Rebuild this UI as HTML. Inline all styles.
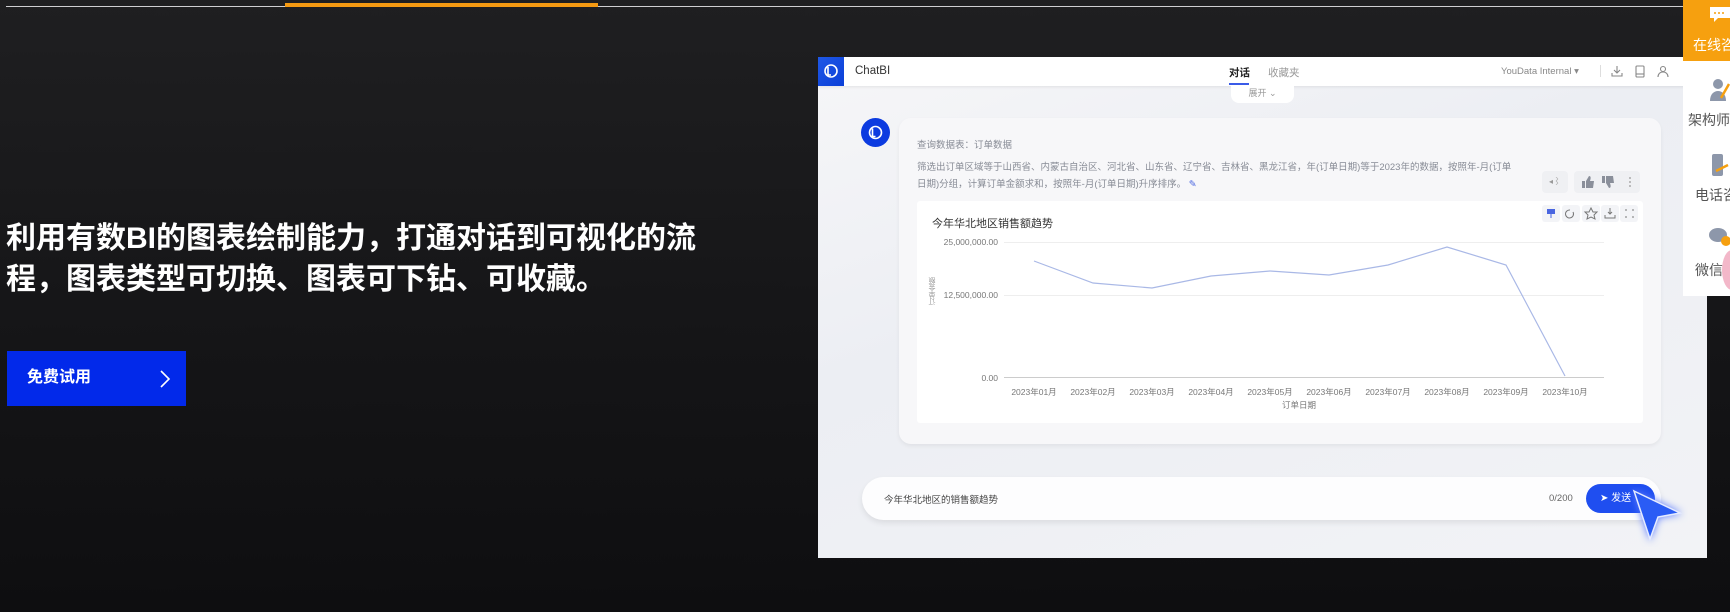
<!DOCTYPE html>
<html><head><meta charset="utf-8"><style>
*{margin:0;padding:0;box-sizing:border-box}
body{width:1730px;height:612px;overflow:hidden;background:linear-gradient(180deg,#1f1f21 0%,#161618 50%,#0e0e10 100%);font-family:"Liberation Sans","Noto Sans CJK SC",sans-serif;position:relative}
.abs{position:absolute}
.h{left:6px;color:#fff;font-weight:700;font-size:30px;white-space:nowrap}
.t{color:#888c96;font-size:11px;white-space:nowrap}
.xl{position:absolute;font-size:8.5px;color:#777;transform:translateX(-50%);white-space:nowrap}
.ib{position:absolute;width:18px;height:17px;background:#f3f4f7;border-radius:3px}
</style></head><body>
<div class="abs" style="left:6px;top:6px;width:1677px;height:1px;background:#cfcfd2"></div>
<div class="abs" style="left:285px;top:3px;width:313px;height:4px;background:#f59a12"></div>

<div class="abs h" style="top:213px">利用有数BI的图表绘制能力，打通对话到可视化的流</div>
<div class="abs h" style="top:254px">程，图表类型可切换、图表可下钻、可收藏。</div>

<div class="abs" style="left:7px;top:351px;width:179px;height:55px;background:#0229ea"></div>
<div class="abs" style="left:27px;top:369px;color:#fff;font-weight:700;font-size:16px;line-height:18px">免费试用</div>
<svg class="abs" style="left:158px;top:369px" width="14" height="20"><path d="M3 2 L11 10 L3 18" stroke="#fff" stroke-width="1.6" fill="none"/></svg>

<div class="abs" style="left:818px;top:57px;width:889px;height:501px;background:linear-gradient(160deg,#f6f6f8,#eceef3 40%,#f2f3f6);overflow:hidden">
  <div class="abs" style="left:0;top:0;width:889px;height:29px;background:#fff;box-shadow:0 1px 3px rgba(0,0,0,.08)"></div>
  <div class="abs" style="left:0;top:0;width:26px;height:29px;background:linear-gradient(135deg,#1f58e6,#0b3fd8)"></div>
  <svg class="abs" style="left:5px;top:6px" width="16" height="16"><circle cx="8" cy="8" r="6" stroke="#fff" stroke-width="1.6" fill="none"/><path d="M5 4v8h3" stroke="#fff" stroke-width="1.6" fill="none"/></svg>
  <div class="abs" style="left:37px;top:8px;font-size:11.5px;color:#333">ChatBI</div>
  <div class="abs" style="left:411px;top:8px;font-size:10.5px;color:#222;font-weight:700">对话</div>
  <div class="abs" style="left:411px;top:26px;width:20px;height:2px;background:#3a5be8"></div>
  <div class="abs" style="left:450px;top:8px;font-size:10.5px;color:#999">收藏夹</div>
  <div class="abs" style="left:683px;top:9px;font-size:9.5px;color:#888">YouData Internal ▾</div>
  <div class="abs" style="left:782px;top:8px;width:1px;height:12px;background:#ddd"></div>
  <svg class="abs" style="left:793px;top:7px" width="60" height="14" fill="none" stroke="#888" stroke-width="1.1"><path d="M6 2v7M3 6l3 3 3-3M1 9v3h10V9"/><rect x="25" y="2" width="8" height="11" rx="1"/><path d="M25 10h8"/><circle cx="52" cy="5" r="2.5"/><path d="M47 13c0-3 2-5 5-5s5 2 5 5"/></svg>
  <div class="abs" style="left:413px;top:29px;width:63px;height:17px;background:#fff;border-radius:0 0 8px 8px;font-size:9px;color:#999;text-align:center;line-height:15px">展开 ⌄</div>

  <div class="abs" style="left:43px;top:61px;width:29px;height:29px;border-radius:50%;background:#0c3be0"></div>
  <svg class="abs" style="left:49px;top:67px" width="17" height="17"><circle cx="8.5" cy="8.5" r="6" stroke="#fff" stroke-width="1.6" fill="none"/><path d="M5.5 4.5v8h3" stroke="#fff" stroke-width="1.6" fill="none"/></svg>

  <div class="abs" style="left:81px;top:61px;width:762px;height:326px;background:#f7f7f9;border-radius:12px;box-shadow:0 2px 4px rgba(0,0,0,.06)"></div>
  <div class="abs t" style="left:99px;top:80px;font-size:9.5px">查询数据表：订单数据</div>
  <div class="abs t" style="left:99px;top:102px;font-size:9.5px">筛选出订单区域等于山西省、内蒙古自治区、河北省、山东省、辽宁省、吉林省、黑龙江省，年(订单日期)等于2023年的数据，按照年-月(订单</div>
  <div class="abs t" style="left:99px;top:119px;font-size:9.5px">日期)分组，计算订单金额求和，按照年-月(订单日期)升序排序。 <span style="color:#4a66e0">✎</span></div>
  <div class="abs" style="left:724px;top:114px;width:26px;height:22px;background:#eff0f3;border-radius:4px;font-size:8px;color:#999;text-align:center;line-height:22px">◂⌇</div>
  <div class="abs" style="left:756px;top:114px;width:66px;height:22px;background:#eff0f3;border-radius:4px"></div>
  <svg class="abs" style="left:762px;top:118px" width="56" height="14"><path d="M2 6h3v7H2zM6 6l3-5c2 0 2 2 1 5h4l-1 7H6z" fill="#8a8f9a"/><path d="M22 8h3V1h-3zM26 8l3 5c2 0 2-2 1-5h4l-1-7h-7z" fill="#8a8f9a"/><circle cx="50" cy="3" r="1" fill="#aaa"/><circle cx="50" cy="7" r="1" fill="#aaa"/><circle cx="50" cy="11" r="1" fill="#aaa"/></svg>

  <div class="abs" style="left:99px;top:144px;width:726px;height:222px;background:#fff;border-radius:3px"></div>
  <div class="abs" style="left:114px;top:158px;font-size:11px;color:#333">今年华北地区销售额趋势</div>
  <div class="ib" style="left:724px;top:148px"></div><div class="ib" style="left:744px;top:148px"></div><div class="ib" style="left:764px;top:148px"></div><div class="ib" style="left:783px;top:148px"></div><div class="ib" style="left:802px;top:148px"></div>
  <svg class="abs" style="left:724px;top:148px" width="98" height="17" fill="none" stroke="#777" stroke-width="1"><rect x="5" y="4" width="8" height="5" fill="#4a66e0" stroke="none"/><path d="M9 9v4" stroke="#4a66e0"/><path d="M28 5a4 4 0 1 0 3 2"/><path d="M49 3l2 4h4l-3 3 1 4-4-2-4 2 1-4-3-3h4z"/><path d="M68 3v6M66 7l2 2 2-2M63 10v3h10v-3"/><path d="M83 5h2M90 5h2M83 12h2M90 12h2"/></svg>

  <div class="abs" style="left:186px;top:185px;width:600px;height:1px;background:#eee"></div>
  <div class="abs" style="left:186px;top:238px;width:600px;height:1px;background:#eee"></div>
  <div class="abs" style="left:186px;top:320px;width:600px;height:1px;background:#ccc"></div>
  <div class="abs" style="left:102px;top:180px;width:78px;text-align:right;font-size:8.5px;color:#777">25,000,000.00</div>
  <div class="abs" style="left:102px;top:233px;width:78px;text-align:right;font-size:8.5px;color:#777">12,500,000.00</div>
  <div class="abs" style="left:102px;top:316px;width:78px;text-align:right;font-size:8.5px;color:#777">0.00</div>
  <div class="abs" style="left:110px;top:220px;font-size:7px;color:#999;writing-mode:vertical-rl;transform:rotate(180deg)">订单金额</div>
  <svg class="abs" style="left:0;top:0" width="889" height="501"><polyline fill="none" stroke="#a9b8e6" stroke-width="1.2" points="216,204 275,226 334,231 393,219 452,214 511,218 570,208 629,190 688,208 747,319"/></svg>
  <div class="xl" style="left:216px;top:329px">2023年01月</div><div class="xl" style="left:275px;top:329px">2023年02月</div><div class="xl" style="left:334px;top:329px">2023年03月</div><div class="xl" style="left:393px;top:329px">2023年04月</div><div class="xl" style="left:452px;top:329px">2023年05月</div><div class="xl" style="left:511px;top:329px">2023年06月</div><div class="xl" style="left:570px;top:329px">2023年07月</div><div class="xl" style="left:629px;top:329px">2023年08月</div><div class="xl" style="left:688px;top:329px">2023年09月</div><div class="xl" style="left:747px;top:329px">2023年10月</div>
  <div class="xl" style="left:481px;top:342px">订单日期</div>

  <div class="abs" style="left:44px;top:420px;width:799px;height:43px;background:#fdfdfe;border-radius:22px;box-shadow:0 3px 6px rgba(0,0,0,.08)"></div>
  <div class="abs" style="left:66px;top:435px;font-size:9.5px;color:#444">今年华北地区的销售额趋势</div>
  <div class="abs" style="left:731px;top:436px;font-size:9.5px;color:#666">0/200</div>
  <div class="abs" style="left:768px;top:427px;width:69px;height:29px;background:#1f4ef0;border-radius:15px;color:#fff;font-size:10px;line-height:29px;padding-left:14px">➤ 发送</div>
  <svg class="abs" style="left:810px;top:430px" width="60" height="60"><path d="M6 4 L52 26 L30 30 L22 52 Z" fill="#2a5cf5" stroke="#e6ecff" stroke-width="1.5" style="filter:drop-shadow(0 0 4px #5b7bff)"/></svg>
</div>

<div class="abs" style="left:1683px;top:0;width:47px;height:296px;background:#fff"></div>
<div class="abs" style="left:1683px;top:0;width:47px;height:61px;background:#f6a00f"></div>
<svg class="abs" style="left:1709px;top:3px" width="21" height="20"><path d="M1 4h20v11h-12l-4 4v-4h-4z" fill="#fff"/><circle cx="6" cy="10" r="1" fill="#f6a00f"/><circle cx="10" cy="10" r="1" fill="#f6a00f"/><circle cx="14" cy="10" r="1" fill="#f6a00f"/></svg>
<div class="abs" style="left:1693px;top:35px;font-size:14px;color:#fff;white-space:nowrap">在线咨询</div>
<svg class="abs" style="left:1709px;top:78px" width="21" height="24"><circle cx="9" cy="6" r="5" fill="#8d97aa"/><path d="M1 23c0-7 4-10 8-10s8 3 8 10z" fill="#8d97aa"/><path d="M12 20l8-14" stroke="#f6a00f" stroke-width="2.5"/></svg>
<div class="abs" style="left:1688px;top:110px;font-size:14px;color:#555;white-space:nowrap">架构师咨询</div>
<svg class="abs" style="left:1710px;top:153px" width="20" height="26"><rect x="2" y="1" width="11" height="22" rx="2" fill="#8d97aa"/><path d="M6 18l12-6" stroke="#f6a00f" stroke-width="2.5"/></svg>
<div class="abs" style="left:1695px;top:185px;font-size:14px;color:#555;white-space:nowrap">电话咨询</div>
<svg class="abs" style="left:1708px;top:226px" width="22" height="26"><ellipse cx="10" cy="9" rx="9" ry="7" fill="#8d97aa"/><circle cx="18" cy="15" r="5" fill="#f6a00f"/></svg>
<div class="abs" style="left:1695px;top:260px;font-size:14px;color:#555;white-space:nowrap">微信社群</div>
<div class="abs" style="left:1722px;top:250px;width:20px;height:40px;border-radius:50%;background:#f3b7c9"></div>
</body></html>
